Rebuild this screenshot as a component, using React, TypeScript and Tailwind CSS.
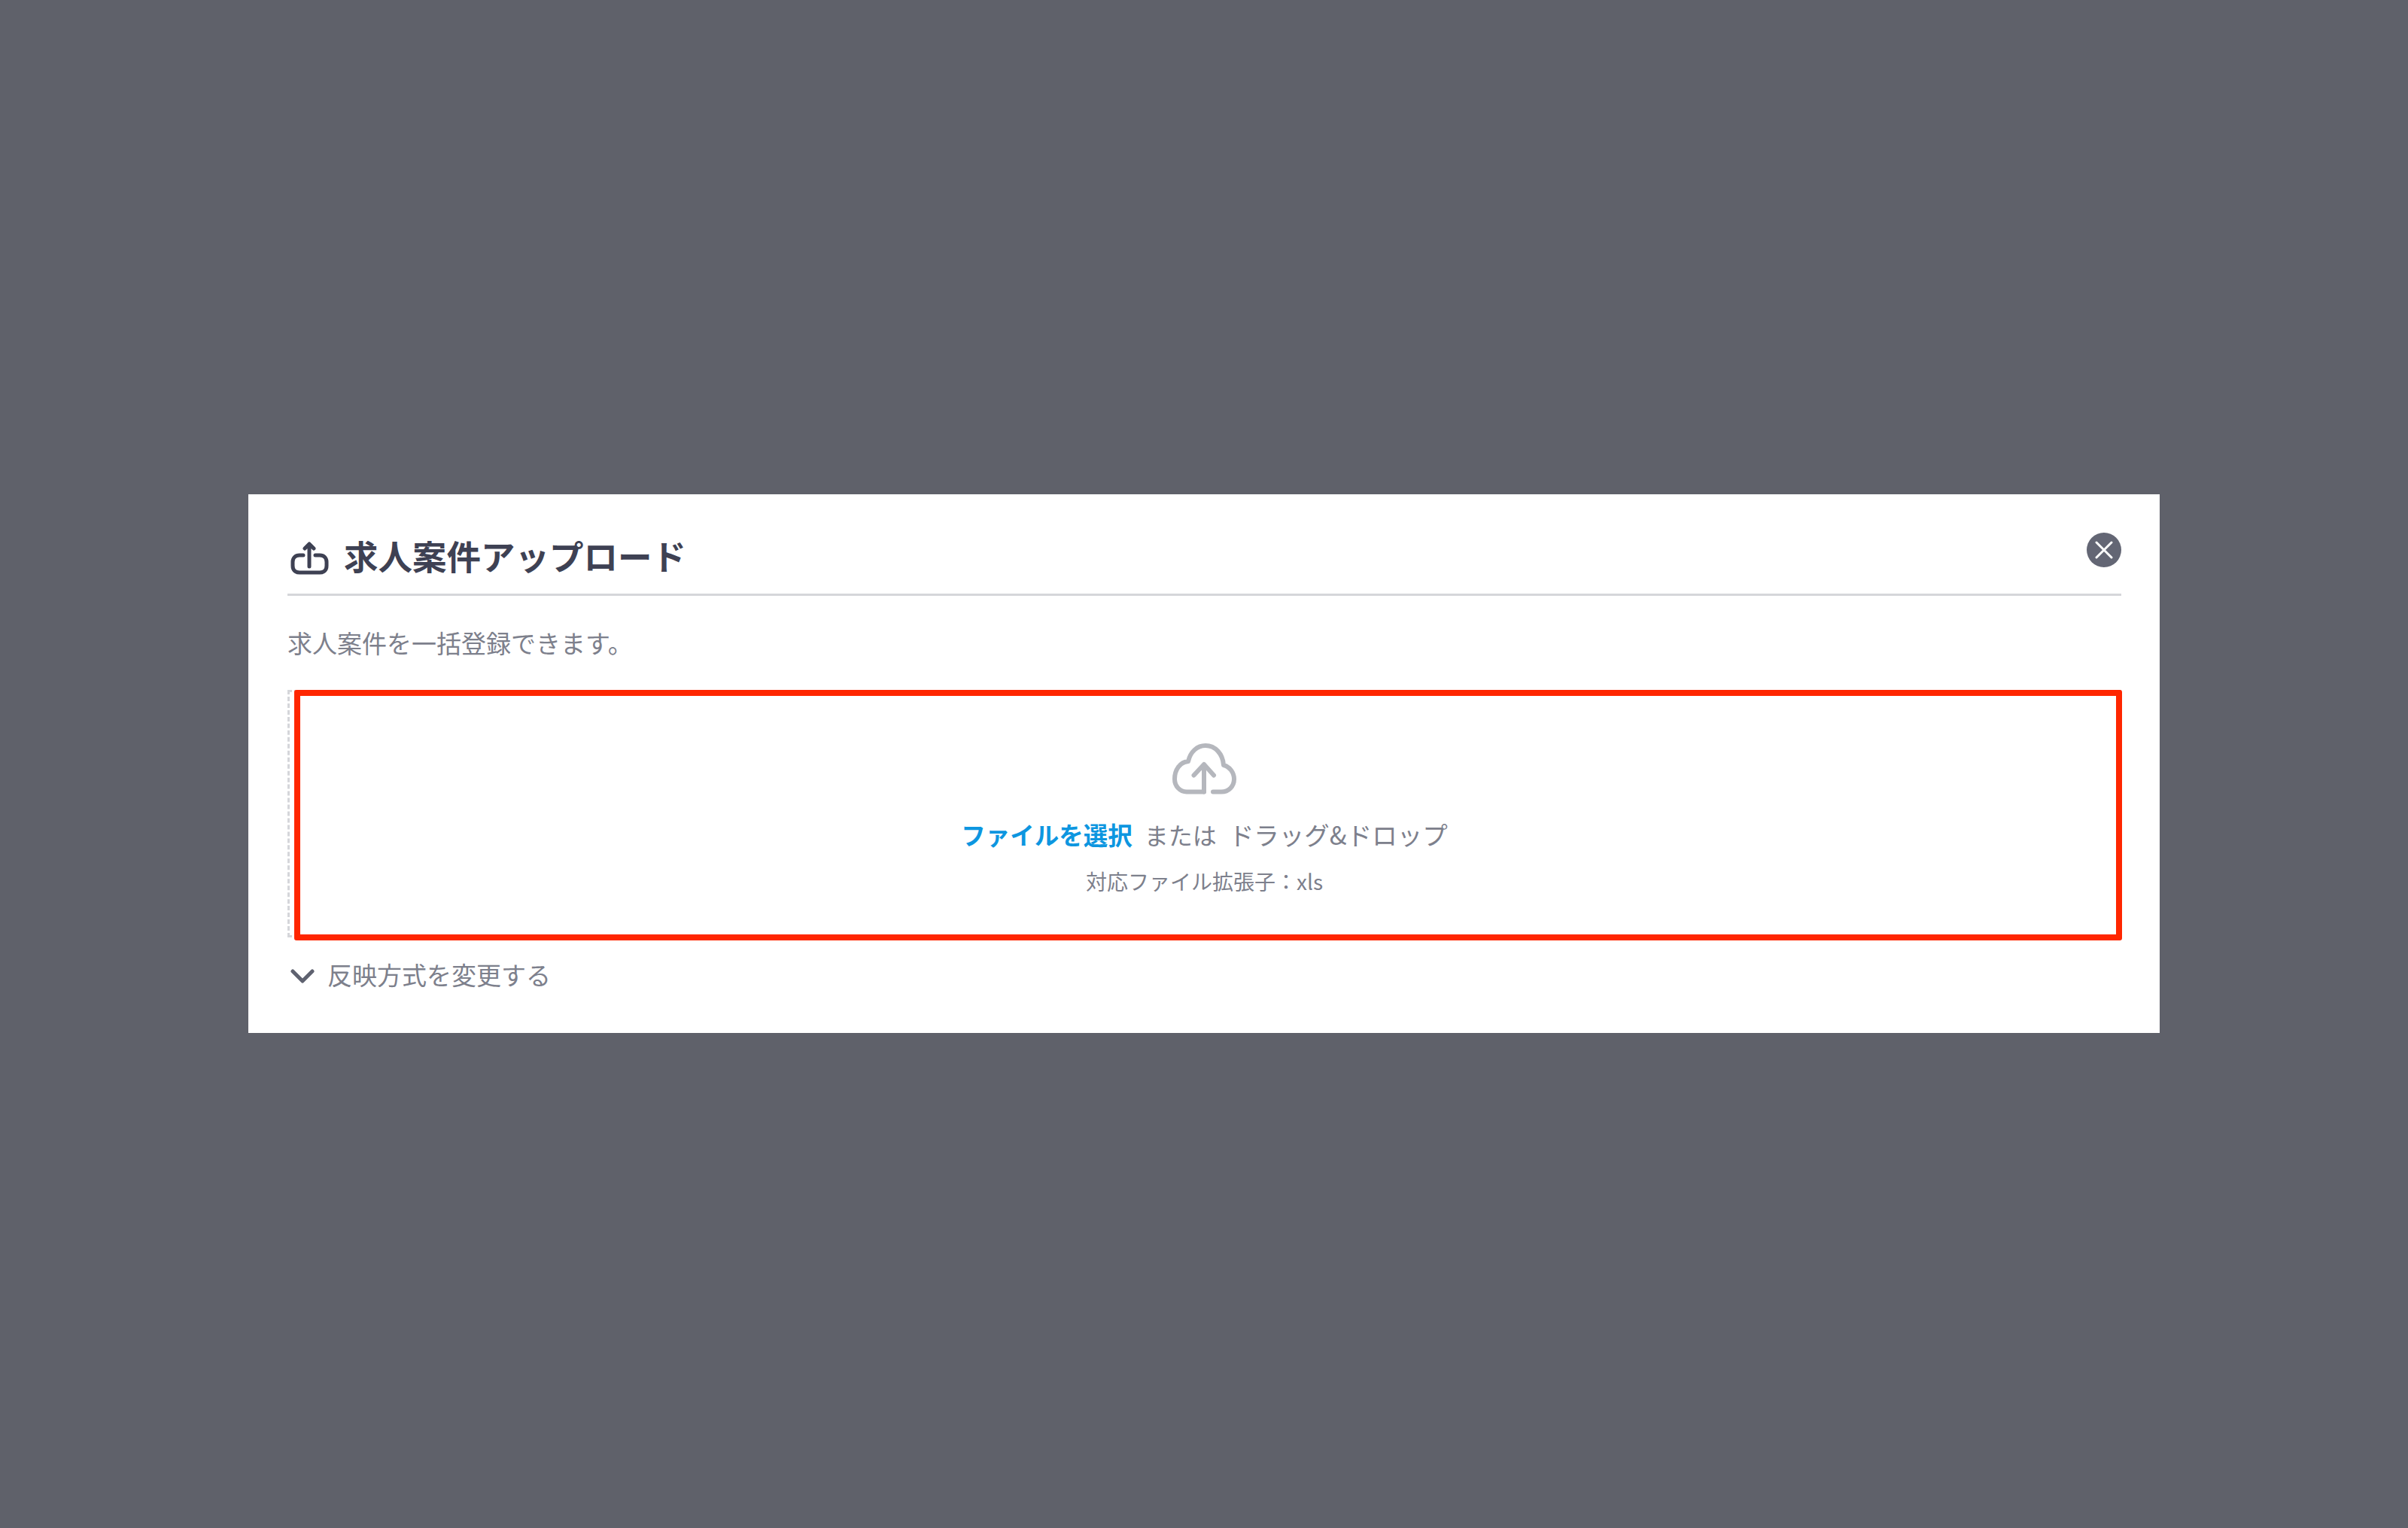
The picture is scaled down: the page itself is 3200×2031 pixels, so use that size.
import React from "react";

const FONT = "font-['Noto_Sans_CJK_JP','Noto_Sans',sans-serif]";

const UploadIcon = () => (
  <svg className="mt-[5px]" width="51" height="46" viewBox="0 0 51 46" fill="none" stroke="#3e4153" strokeWidth="5" strokeLinecap="round" strokeLinejoin="round">
    <path d="M17 18H12C6.5 18 3 21.5 3 27V32C3 38 6.5 41 12 41H39C44.5 41 48 38 48 32V27C48 21.5 44.5 18 39 18H33" />
    <path d="M25 33V3M19 9L25 3L31 9" />
  </svg>
);

const CloudIcon = () => (
  <svg width="85" height="70" viewBox="0 0 85 70" fill="none" stroke="#b5b7bd" strokeWidth="6" strokeLinecap="round" strokeLinejoin="round">
    <path d="M42 64.5H19C10 64.5 3 57 3 47.5C3 35 10 25 21 24C24 11 33 3 44 3C57 3 67 14 68 29C76 31 82 39 82 47.5C82 57 75 64.5 65 64.5H54" />
    <path d="M42 64.5V28M28.5 42.5L42 28L55 42.5" />
  </svg>
);

const App = () => {
  return (
    <div className={`flex h-[2031px] w-full items-center justify-center bg-[#5f616a] pb-[1px] ${FONT}`}>
      <div className="h-[716px] w-[2540px] bg-white pl-[52px] pr-[51px] pt-[51px]">
        <div className="flex h-[84px] items-start justify-between border-b-[3px] border-[#d5d6da]">
          <div className="mt-[7px] flex items-start gap-[20px] pl-[4px]">
            <UploadIcon />
            <h2 className="text-[45.5px] leading-[46px] font-bold text-[#3e4153]">求人案件アップロード</h2>
          </div>
          <button className="flex size-[46px] items-center justify-center rounded-full bg-[#636674]">
            <svg width="24" height="24" viewBox="0 0 24 24" fill="none" stroke="#ffffff" strokeWidth="3" strokeLinecap="round">
              <path d="M2 2L22 22M22 2L2 22" />
            </svg>
          </button>
        </div>

        <p className="mt-[38px] text-[33px] leading-[48px] text-[#7d808c]">求人案件を一括登録できます。</p>

        <div className="relative mt-[39px] flex h-[329px] flex-col items-center border-[3px] border-dashed border-[#d5d6da] pt-[68px]">
          <CloudIcon />
          <div className="mt-[27px] flex items-center text-[32px] leading-[48px] text-[#7d808c]">
            <span className="text-[32.5px] font-bold text-[#0d96e0]">ファイルを選択</span>
            <span className="ml-[16px]">または</span>
            <span className="ml-[16px] text-[33.5px]">ドラッグ&ドロップ</span>
          </div>
          <p className="mt-[18px] text-[28px] leading-[40px] text-[#7d808c]">対応ファイル拡張子：xls</p>
          {/* red annotation frame */}
          <div className="absolute -top-[3px] -right-[4px] -bottom-[7px] left-[6px] rounded-[3px] border-[8px] border-[#ff2600]" />
        </div>

        <div className="mt-[25px] flex items-center gap-[17px] pl-[4px]">
          <svg className="mt-[4px]" width="32" height="19" viewBox="0 0 32 19" fill="none" stroke="#5f6270" strokeWidth="5" strokeLinecap="round" strokeLinejoin="round">
            <path d="M3 3L16 16L29 3" />
          </svg>
          <span className="text-[33px] leading-[48px] text-[#7d808c]">反映方式を変更する</span>
        </div>
      </div>
    </div>
  );
};

export default App;
